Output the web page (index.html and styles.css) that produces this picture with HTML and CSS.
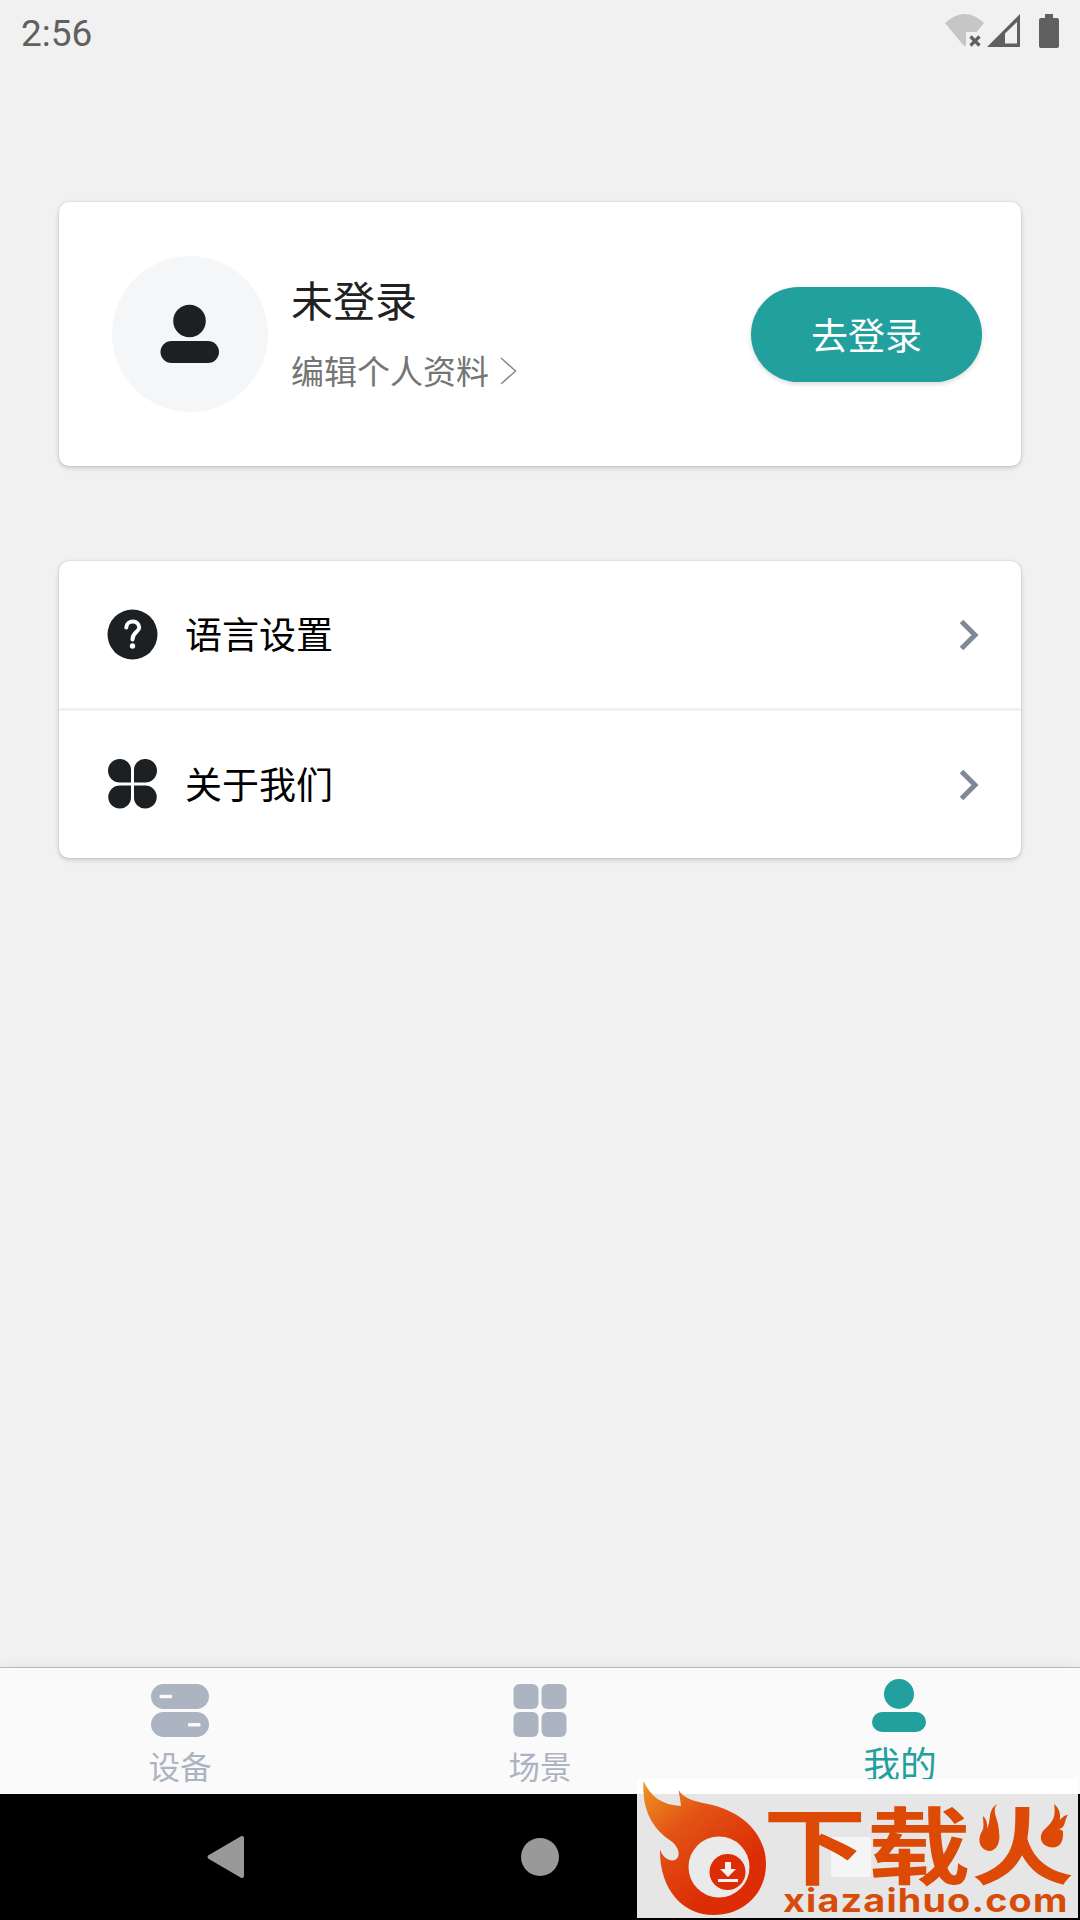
FILE: index.html
```html
<!DOCTYPE html>
<html lang="zh-CN">
<head>
<meta charset="utf-8">
<title>我的</title>
<link rel="stylesheet" href="styles.css">
</head>
<body>
<div class="screen">
  <header class="status">
    <span class="clock">2:56</span>
    <svg class="status-icons" width="116" height="36" viewBox="944 13 116 36">
      <path fill="#c6c6c6" d="M945 23Q965 5 984 23L976.5 32H966V45.500L964 46Z"/>
      <path stroke="#606060" stroke-width="3.200" d="M970.500 36.500L979.500 45.500M979.500 36.500L970.500 45.500"/>
      <path fill="#606060" fill-rule="evenodd" d="M987 47L1020 14V47ZM1005 33.500V43.500H1017V22Z"/>
      <path fill="#606060" d="M1045 14h8v4h4a2 2 0 0 1 2 2v26a2 2 0 0 1-2 2h-16a2 2 0 0 1-2-2V20a2 2 0 0 1 2-2h4z"/>
    </svg>
  </header>

  <main class="content">
    <section class="card profile">
      <div class="avatar">
        <svg width="60" height="60" viewBox="0 0 60 60" fill="#1d2023">
          <circle cx="29.500" cy="17" r="16.300"/>
          <rect x="0.500" y="37" width="58.500" height="22" rx="11"/>
        </svg>
      </div>
      <div class="profile-text">
        <div class="name">未登录</div>
        <div class="edit">编辑个人资料
          <svg width="17" height="28" viewBox="0 0 17 28" fill="none" stroke="#8c8c8c" stroke-width="1.600"><path d="M1 1L15.500 14L1 27"/></svg>
        </div>
      </div>
      <button class="login">去登录</button>
    </section>

    <section class="card menu">
      <a class="row">
        <svg width="51" height="51" viewBox="0 0 51 51">
          <circle cx="25.500" cy="25.500" r="25" fill="#1d2023"/>
          <path d="M19.300 18.500C19.500 10.500 32.500 10.500 32.200 18.800C32 23 25.500 23 25.500 30.500" fill="none" stroke="#fff" stroke-width="4" stroke-linecap="round"/>
          <circle cx="25.500" cy="37" r="2.700" fill="#fff"/>
        </svg>
        <span class="row-label">语言设置</span>
        <svg class="chevron" width="21" height="32" viewBox="0 0 21 32"><path d="M2.500 2.500L16 16L2.500 29.500" fill="none" stroke="#7f8896" stroke-width="5"/></svg>
      </a>
      <a class="row">
        <svg width="51" height="51" viewBox="0 0 51 51" fill="#1d2023">
          <path d="M12.500 0A11 11 0 0 1 24 11V23.500H13A11.750 11.750 0 0 1 12.500 0Z"/>
          <path d="M38.500 0A11 11 0 0 0 27 11V23.500H38A11.750 11.750 0 0 0 38.500 0Z"/>
          <path d="M12.500 49.500A11 11 0 0 0 24 38.500V26.500H13A11.500 11.500 0 0 0 12.500 49.500Z"/>
          <path d="M38.500 49.500A11 11 0 0 1 27 38.500V26.500H38A11.500 11.500 0 0 1 38.500 49.500Z"/>
        </svg>
        <span class="row-label">关于我们</span>
        <svg class="chevron" width="21" height="32" viewBox="0 0 21 32"><path d="M2.500 2.500L16 16L2.500 29.500" fill="none" stroke="#7f8896" stroke-width="5"/></svg>
      </a>
    </section>
  </main>

  <nav class="tabs">
    <a class="tab">
      <svg width="58" height="53" viewBox="0 0 58 53">
        <g fill="#acb3c1"><rect width="58" height="25" rx="12.500"/><rect y="28" width="58" height="25" rx="12.500"/></g>
        <g fill="#fafafa"><rect x="8.500" y="10.800" width="12.500" height="3.400" rx="1"/><rect x="37" y="39" width="12.500" height="3.400" rx="1"/></g>
      </svg>
      <span>设备</span>
    </a>
    <a class="tab">
      <svg width="54" height="53" viewBox="0 0 54 53" fill="#acb3c1">
        <rect x="0.500" width="25" height="25" rx="6"/><rect x="28.500" width="25" height="25" rx="6"/>
        <rect x="0.500" y="28" width="25" height="25" rx="6"/><rect x="28.500" y="28" width="25" height="25" rx="6"/>
      </svg>
      <span>场景</span>
    </a>
    <a class="tab active">
      <svg width="54" height="53" viewBox="0 0 54 53" fill="#21a09e">
        <circle cx="27" cy="15" r="15"/><rect y="33" width="54" height="20" rx="10"/>
      </svg>
      <span>我的</span>
    </a>
  </nav>

  <footer class="sysnav">
    <svg width="40" height="44" viewBox="0 0 40 44"><path d="M3.500 22L36 3V41Z" fill="#999" stroke="#999" stroke-width="4" stroke-linejoin="round"/></svg>
    <svg width="40" height="40" viewBox="0 0 40 40"><circle cx="20" cy="20" r="19" fill="#999"/></svg>
    <svg width="40" height="40" viewBox="0 0 40 40"><rect width="40" height="40" rx="3" fill="#999"/></svg>
  </footer>

  <div class="watermark">
    <svg width="441" height="139" viewBox="637 1779 441 139">
      <defs>
        <linearGradient id="flame" x1="0" y1="0" x2="0.600" y2="0.800">
          <stop offset="0" stop-color="#ee9722"/>
          <stop offset="0.450" stop-color="#e25315"/>
          <stop offset="1" stop-color="#dc2d05"/>
        </linearGradient>
      </defs>
      <path fill="url(#flame)" d="M643.500 1781C651 1797 662 1805 681 1806Q680 1798 678.500 1790C684 1799 694 1801 708 1804C743 1811 766 1835 766 1864C766 1894 743 1915 714 1915C682 1915 659 1888 660 1849C662 1857 669 1862 675 1860C682 1856 678 1846 671 1841C650 1827 642 1807 643.500 1781Z"/>
      <circle cx="719" cy="1867" r="30.500" fill="#eaeaea"/>
      <circle cx="727.500" cy="1872" r="18" fill="#dc2d05"/>
      <path fill="#f2f2f2" d="M725 1862h6v7h5l-8 8-8-8h5zM718 1879h20v3h-20z"/>
      <g class="brand">
        <text transform="translate(763 1878) scale(1.230 1)">下</text>
        <text transform="translate(867 1878) scale(1.230 1)">载</text>
        <text transform="translate(971 1878) scale(1.230 1)">火</text>
      </g>
      <path class="patch" d="M972 1802H1011V1832L1001 1854H972ZM1035 1802H1074V1852H1048L1035 1842Z"/>
      <g fill="#dc4a05">
        <path d="M997 1804C991 1812 999 1819 999 1832C1001 1843 996 1851 989 1851C981 1850 977 1842 981 1833C985 1827 983 1824 983 1816Q988 1820 987 1829C992 1819 987 1811 997 1804Z"/>
        <path d="M1054 1804C1061 1810 1060 1815 1060 1820Q1064 1815 1068 1815C1064 1820 1066 1828 1059 1829L1063 1831C1064 1844 1058 1849 1049 1847C1039 1844 1039 1834 1045 1829C1054 1821 1056 1815 1054 1804Z"/>
      </g>
      <text class="domain" transform="translate(783 1911.500) scale(1.180 1)" textLength="241" lengthAdjust="spacing">xiazaihuo.com</text>
    </svg>
  </div>
</div>
</body>
</html>
```
FILE: styles.css
```css
* { box-sizing: border-box; }
body { margin: 0; font-family: Roboto, "Noto Sans CJK SC", sans-serif; }
svg { display: block; flex: none; }

.screen {
  position: relative;
  display: flex;
  flex-direction: column;
  width: 1080px;
  height: 1920px;
  overflow: hidden;
  background: #f1f1f1;
}

.status {
  display: flex;
  justify-content: space-between;
  height: 63px;
  padding: 13px 20px 0 21px;
}
.clock { padding-top: 1px; font-size: 37px; line-height: 40px; color: #606060; }

.content { flex: 1; padding: 139px 59px 0; }
.card {
  background: #fff;
  border-radius: 10px;
  box-shadow: 0 2px 5px rgba(0, 0, 0, .17), 0 0 2px rgba(0, 0, 0, .14);
}

.profile {
  display: flex;
  align-items: center;
  height: 264px;
  margin-bottom: 95px;
  padding: 0 39px 0 53px;
}
.avatar {
  display: flex;
  align-items: center;
  justify-content: center;
  width: 156px;
  height: 156px;
  margin: -1px 23px 0 0;
  border-radius: 50%;
  background: #f5f6f8;
}
.profile-text {
  flex: 1;
  display: flex;
  flex-direction: column;
  gap: 10px;
  padding-top: 7px;
}
.name { font-size: 42px; line-height: 60px; color: #212121; }
.edit {
  display: flex;
  align-items: center;
  gap: 11px;
  font-size: 33px;
  line-height: 60px;
  color: #757575;
}
.edit svg { margin-top: -3px; }
.login {
  width: 231px;
  height: 95px;
  padding: 0 0 1px;
  border: 0;
  border-radius: 48px;
  background: #21a09e;
  box-shadow: 0 2px 5px rgba(0, 0, 0, .15);
  font: inherit;
  font-size: 37px;
  color: #fff;
}

.row {
  display: flex;
  align-items: center;
  height: 147px;
  padding: 0 41px 0 48px;
}
.row + .row { border-top: 3px solid #f1f1f1; height: 150px; }
.row-label {
  flex: 1;
  margin: 5px 0 0 27px;
  font-size: 37px;
  line-height: 54px;
  color: #000;
}

.tabs {
  display: flex;
  height: 127px;
  border-top: 1px solid #b9b9b9;
  background: #fafafa;
  box-shadow: 0 -1px 12px rgba(0, 0, 0, .06);
}
.tab {
  flex: 1;
  display: flex;
  flex-direction: column;
  align-items: center;
  padding-top: 16px;
  font-size: 31.5px;
  line-height: 46px;
  color: #acb3c1;
}
.tab span { margin-top: 9px; }
.tab.active { padding-top: 11px; font-size: 36.75px; color: #21a09e; }
.tab.active svg { margin-right: 2px; }
.tab.active span { margin-top: 11px; }

.sysnav {
  display: flex;
  align-items: center;
  justify-content: space-between;
  height: 126px;
  padding: 0 209px 0 206px;
  background: #000;
}
.sysnav svg:nth-child(2) { margin-left: 3px; }

.watermark {
  position: absolute;
  left: 637px;
  top: 1779px;
  background: rgba(255, 255, 255, .9);
}
.watermark svg { overflow: visible; }
.brand { font: 700 84px "Noto Sans CJK SC", sans-serif; fill: #dc4a05; }
.patch { fill: #e6e6e6; }
.domain { font: 700 32px Inter, sans-serif; fill: #d84c0b; }
```
